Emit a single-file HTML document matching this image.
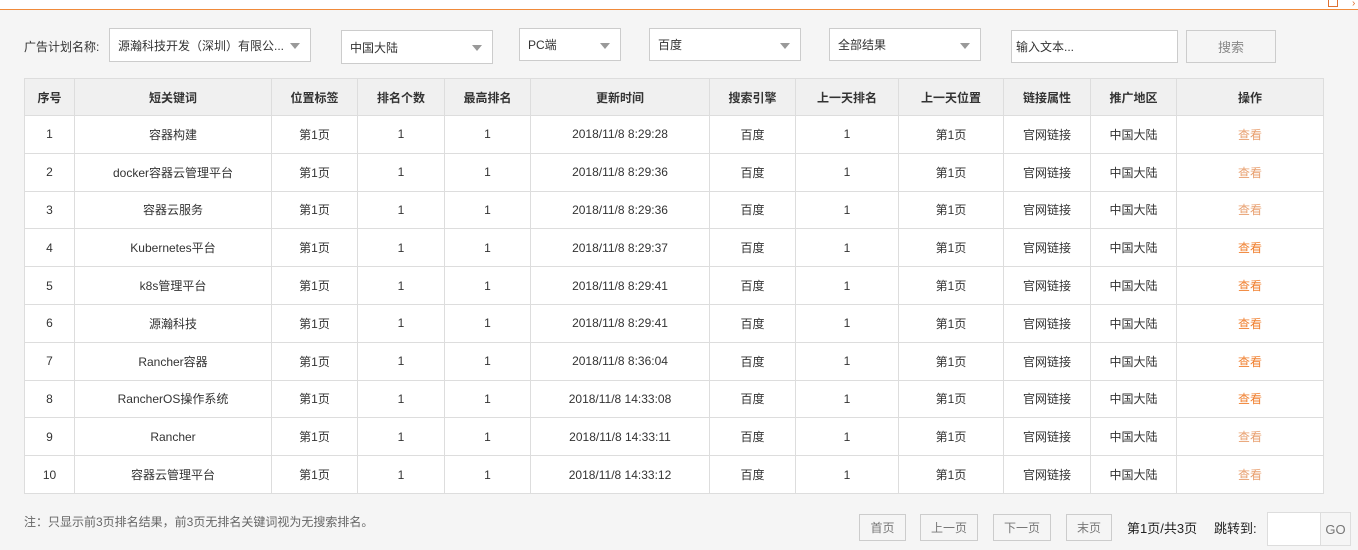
<!DOCTYPE html><html><head><meta charset="utf-8"><style>
body{margin:0;width:1358px;height:550px;background:#f5f5f5;font-family:"Liberation Sans","Noto Sans CJK SC",sans-serif;font-size:12px;color:#333;position:relative;overflow:hidden}
.top{position:absolute;left:0;top:0;width:1358px;height:9px;background:#fff;border-bottom:1px solid #f08a3a}
.a{position:absolute;box-sizing:border-box}
.sel{background:#fff;border:1px solid #ccc;padding-left:8px;display:flex;align-items:center}
.sel:after{content:"";position:absolute;right:10px;top:50%;margin-top:-2px;border:5px solid transparent;border-top:6px solid #999;border-bottom:0}
.inp{background:#fff;border:1px solid #ccc;padding-left:4px;display:flex;align-items:center}
table{position:absolute;left:24px;top:78px;border-collapse:collapse;background:#fff}
td,th{border:1px solid #ddd;text-align:center;height:36.8px;padding:0;font-size:12px}
th{background:#f0f0f0;font-weight:bold;height:36px}
.o{color:#f08030}.l{color:#e8a070}
.btn{background:#f5f5f5;border:1px solid #ccc;color:#777;display:flex;align-items:center;justify-content:center}
</style></head><body>
<div class="top"></div>
<div class="a" style="left:1328px;top:0;width:10px;height:7px;border:1px solid #e07030;border-top:none"></div>
<div class="a" style="left:1352px;top:0;color:#e07030;font-size:10px;line-height:8px">›</div>
<div class="a" style="left:24px;top:38px">广告计划名称:</div>
<div class="a sel" style="left:109px;top:28px;width:202px;height:34px">源瀚科技开发（深圳）有限公...</div>
<div class="a sel" style="left:341px;top:30px;width:152px;height:34px">中国大陆</div>
<div class="a sel" style="left:519px;top:28px;width:102px;height:33px">PC端</div>
<div class="a sel" style="left:649px;top:28px;width:152px;height:33px">百度</div>
<div class="a sel" style="left:829px;top:28px;width:152px;height:33px">全部结果</div>
<div class="a inp" style="left:1011px;top:30px;width:167px;height:33px">输入文本...</div>
<div class="a btn" style="left:1186px;top:30px;width:90px;height:33px;font-size:13px;color:#888">搜索</div>
<table>
<tr><th style="width:49px">序号</th><th style="width:196px">短关键词</th><th style="width:85px">位置标签</th><th style="width:86px">排名个数</th><th style="width:85px">最高排名</th><th style="width:178px">更新时间</th><th style="width:85px">搜索引擎</th><th style="width:102px">上一天排名</th><th style="width:104px">上一天位置</th><th style="width:86px">链接属性</th><th style="width:85px">推广地区</th><th style="width:146px">操作</th></tr>
<tr><td>1</td><td>容器构建</td><td>第1页</td><td>1</td><td>1</td><td>2018/11/8 8:29:28</td><td>百度</td><td>1</td><td>第1页</td><td>官网链接</td><td>中国大陆</td><td class="l">查看</td></tr>
<tr><td>2</td><td>docker容器云管理平台</td><td>第1页</td><td>1</td><td>1</td><td>2018/11/8 8:29:36</td><td>百度</td><td>1</td><td>第1页</td><td>官网链接</td><td>中国大陆</td><td class="l">查看</td></tr>
<tr><td>3</td><td>容器云服务</td><td>第1页</td><td>1</td><td>1</td><td>2018/11/8 8:29:36</td><td>百度</td><td>1</td><td>第1页</td><td>官网链接</td><td>中国大陆</td><td class="l">查看</td></tr>
<tr><td>4</td><td>Kubernetes平台</td><td>第1页</td><td>1</td><td>1</td><td>2018/11/8 8:29:37</td><td>百度</td><td>1</td><td>第1页</td><td>官网链接</td><td>中国大陆</td><td class="o">查看</td></tr>
<tr><td>5</td><td>k8s管理平台</td><td>第1页</td><td>1</td><td>1</td><td>2018/11/8 8:29:41</td><td>百度</td><td>1</td><td>第1页</td><td>官网链接</td><td>中国大陆</td><td class="o">查看</td></tr>
<tr><td>6</td><td>源瀚科技</td><td>第1页</td><td>1</td><td>1</td><td>2018/11/8 8:29:41</td><td>百度</td><td>1</td><td>第1页</td><td>官网链接</td><td>中国大陆</td><td class="o">查看</td></tr>
<tr><td>7</td><td>Rancher容器</td><td>第1页</td><td>1</td><td>1</td><td>2018/11/8 8:36:04</td><td>百度</td><td>1</td><td>第1页</td><td>官网链接</td><td>中国大陆</td><td class="o">查看</td></tr>
<tr><td>8</td><td>RancherOS操作系统</td><td>第1页</td><td>1</td><td>1</td><td>2018/11/8 14:33:08</td><td>百度</td><td>1</td><td>第1页</td><td>官网链接</td><td>中国大陆</td><td class="o">查看</td></tr>
<tr><td>9</td><td>Rancher</td><td>第1页</td><td>1</td><td>1</td><td>2018/11/8 14:33:11</td><td>百度</td><td>1</td><td>第1页</td><td>官网链接</td><td>中国大陆</td><td class="l">查看</td></tr>
<tr><td>10</td><td>容器云管理平台</td><td>第1页</td><td>1</td><td>1</td><td>2018/11/8 14:33:12</td><td>百度</td><td>1</td><td>第1页</td><td>官网链接</td><td>中国大陆</td><td class="l">查看</td></tr>
</table>
<div class="a" style="left:24px;top:513px;color:#666">注：只显示前3页排名结果，前3页无排名关键词视为无搜索排名。</div>
<div class="a btn" style="left:859px;top:514px;width:47px;height:27px">首页</div>
<div class="a btn" style="left:920px;top:514px;width:58px;height:27px">上一页</div>
<div class="a btn" style="left:993px;top:514px;width:58px;height:27px">下一页</div>
<div class="a btn" style="left:1066px;top:514px;width:46px;height:27px">末页</div>
<div class="a" style="left:1127px;top:518px;font-size:13px;color:#222">第1页/共3页</div>
<div class="a" style="left:1214px;top:518px;font-size:13px;color:#222">跳转到:</div>
<div class="a" style="left:1267px;top:512px;width:54px;height:34px;background:#fff;border:1px solid #ddd"></div>
<div class="a btn" style="left:1320px;top:512px;width:31px;height:34px;border-color:#ddd;font-size:13px">GO</div>
</body></html>
